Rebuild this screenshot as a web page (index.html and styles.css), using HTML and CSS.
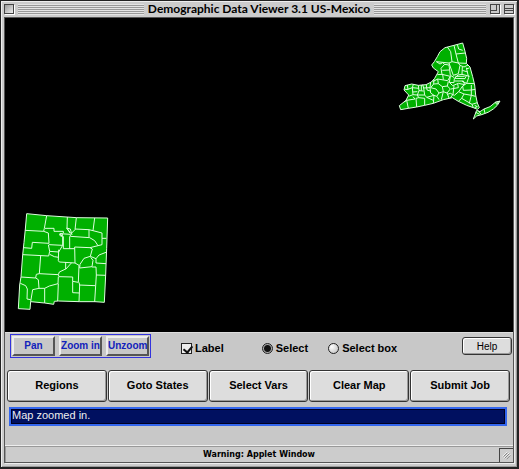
FILE: index.html
```html
<!DOCTYPE html>
<html lang="en">
<head>
	<meta charset="UTF-8">
	<title>Demographic Data Viewer 3.1 US-Mexico</title>
	<link rel="stylesheet" href="styles.css">
</head>
<body>
<div class="window">
	<header class="titlebar">
		<button class="box" type="button" aria-label="Close"></button>
		<div class="stripes"></div>
		<h1>Demographic Data Viewer 3.1 US-Mexico</h1>
		<div class="stripes"></div>
		<button class="box zoombox" type="button" aria-label="Zoom"></button>
		<button class="box shadebox" type="button" aria-label="Collapse"></button>
	</header>
	<main class="content">
		<div class="map">
			<svg class="newmexico" viewBox="0 0 315 330" role="img" aria-label="New Mexico">
				<path class="state" d="M50 26L110 32L200 38L293 39L290 130L287 210L283 292L255 290L208 290L145 288L133 289L131 298L104 294L62 290L60 313L25 311L29 240L33 215L38 150L42 112L46 72Z"/>
				<!-- counties -->
				<path d="M110 32L103 70L101 79L45 76M105 70H132V79H160V84M172 36L171 70L183 86L195 74L199 38M254 39L249 77M195 72L237 74L249 77L276 84V100H289M276 100V119L264 122L254 107L239 98L181 94V88L150 86L158 96V121L117 119M237 75V97M101 79L115 84L117 115L67 112L65 130L41 128M115 119L119 139L146 141L158 121M160 94V131H194M179 94V131M39 149L116 153L119 139M146 134L145 167L148 171L195 174L194 126L240 128L264 122M119 148L133 155L146 157M240 128L247 132L241 154L258 161L267 150L288 142M241 154L222 160L210 178L209 189L246 185L249 166L242 157M92 152L88 206L79 208L77 219L33 216M88 206L145 209L148 201L167 192V171M167 193L185 173M195 174L207 181L205 232L188 229V216L147 215L145 209M246 186H258L259 210L287 211M258 160V174L288 176M259 210L254 290M207 240L255 242M207 232L209 240L207 290M188 229V263L208 264M145 215L144 236L118 243L104 250V294M145 236L143 288M77 219L85 224L87 250L104 250M87 250L68 254L62 290M31 235L47 242L52 252L51 282L62 284"/>
				<path d="M149 87L157 86V94L150 92ZM180 84L170 69L181 72L186 90"/>
			</svg>
			<svg class="newyork" viewBox="0 0 360 270" role="img" aria-label="New York">
				<path class="state" d="M192 31L218 24L224 45L230 70L229 85L240 96L248 125L254 150L257 180L262 204L268 218L262 223L250 218L230 211L205 199L187 188L160 194L130 205L104 211L80 216L55 220L32 224L28 212L48 196L56 180L42 165L45 152L65 147L85 151L108 149L124 141L134 130L145 110L130 99L125 90L133 80L142 65L150 50L165 38Z"/>
				<path class="state" d="M250 252L260 226L270 230L282 222L300 215L316 202L330 198L322 211L310 222L294 232L275 239L260 243Z"/>
				<!-- counties -->
				<path d="M172 36L182 50L186 80L177 84L139 80M192 31L198 57L226 54M202 28L206 42L218 46M198 57L205 84L229 85M186 80L205 84L210 91L205 116L190 121L177 84M139 80L150 87L158 83L164 88L153 100L156 118L142 119M164 88L177 90L181 121L193 128M156 118L181 124L173 137L143 132L128 140M210 91L222 96L234 90M217 96L216 118L239 124M216 118L204 120L194 130L225 131L229 122M229 98L236 128L230 145L252 146M193 130L192 143L178 142L181 124M194 138L220 138L224 149L205 145L188 152L178 142M230 145L218 153L206 170L193 181M192 152L189 178L181 189M218 153L220 166L244 165L256 163M206 170L222 177L215 190L205 199M222 177L244 181L257 184M244 150L244 181L238 205M215 190L234 201L246 208L262 203M246 208L250 218M175 139L172 153L181 162L171 174L160 170L154 194M172 153L157 155L145 146L143 132M157 155L160 170L147 174L140 184L132 181L130 205M132 133L131 147L145 146M131 147L122 158L138 162L147 174M171 174L177 189M122 141L120 158L101 159L98 149M120 158L122 174L132 181L110 187L104 180L101 159M110 187L130 196M85 151L87 167L101 168M87 167L82 180L104 180M82 180L86 188L104 190L104 211M86 188L78 190L80 216M70 148L67 158L87 160M67 158L51 164L43 162M67 158L69 179L82 180M69 179L56 184M69 185L75 192L50 196L55 220M50 196L42 201M52 150L54 163M109 150L111 165L121 168M183 162L205 158L203 146M193 181L181 175L172 178M231 101L238 99M217 106L233 111M94 150L94 167M82 170L68 171M141 184L147 194M158 118L160 134M178 105L157 106M196 124L224 124M230 145L216 139"/>
				<path d="M265 227L274 239M282 222L285 235M254 211L262 215L254 218M257 232L269 238"/>
				<path class="state" d="M316 202L326 200L320 208Z"/>
			</svg>
		</div>
		<div class="controls">
			<div class="tools">
				<button type="button">Pan</button>
				<button type="button">Zoom in</button>
				<button type="button">Unzoom</button>
			</div>
			<div class="options">
				<label><input name="label" type="checkbox" checked>Label</label>
				<label><input name="mode" type="radio" value="select" checked>Select</label>
				<label><input name="mode" type="radio" value="box">Select box</label>
			</div>
			<button class="push help" type="button">Help</button>
		</div>
		<div class="actions">
			<button class="push" type="button">Regions</button>
			<button class="push" type="button">Goto States</button>
			<button class="push" type="button">Select Vars</button>
			<button class="push" type="button">Clear Map</button>
			<button class="push" type="button">Submit Job</button>
		</div>
		<input class="message" type="text" aria-label="Message" value="Map zoomed in." readonly>
		<footer class="warning">
			<span>Warning: Applet Window</span>
			<svg class="grip" viewBox="0 0 14 14" aria-hidden="true">
				<path class="light" d="M3 8L8 3M4 10L10 4M6 11L11 6"/>
				<path d="M4 8L8 4M5 10L10 5M7 11L11 7"/>
			</svg>
		</footer>
	</main>
</div>
</body>
</html>
```
FILE: styles.css
```css
* {
	box-sizing: border-box;
}
body {
	margin: 0;
	font-family: "Liberation Sans", Arial, sans-serif;
	font-size: 11px;
	color: #000;
}
button, input {
	margin: 0;
	padding: 0;
	font: inherit;
	color: inherit;
}
.window {
	display: flex;
	flex-direction: column;
	min-height: 100vh;
	padding: 0 3px 4px;
	border: 1px solid #222;
	border-right-width: 2px;
	border-bottom-width: 2px;
	background: #ccc;
	box-shadow: inset 1px 1px #eee, inset -1px -1px #999;
}

/* title bar */
.titlebar {
	display: flex;
	align-items: center;
	gap: 4px;
	height: 16px;
}
.titlebar h1 {
	margin: 0;
	font: bold 12px/16px Lato, sans-serif;
}
.stripes {
	flex: 1 1 0px;
	height: 11px;
	background: repeating-linear-gradient(#e4e4e4 0 1px, #999 1px 2px);
}
/* one box on the left, two on the right: keeps the title centred */
.box + .stripes {
	flex-basis: 14px;
}
.box {
	width: 10px;
	height: 10px;
	border: 1px solid #444;
	background: linear-gradient(135deg, #999, #eee);
	box-shadow: 1px 1px #fff;
}
.zoombox {
	background:
		linear-gradient(#444, #444) 5px 0 / 1px 6px no-repeat,
		linear-gradient(#444, #444) 0 5px / 6px 1px no-repeat,
		#ccc;
}
.shadebox {
	background:
		linear-gradient(#444, #444) 0 3px / 100% 1px no-repeat,
		linear-gradient(#444, #444) 0 5px / 100% 1px no-repeat,
		#ccc;
}

.content {
	display: flex;
	flex: 1;
	flex-direction: column;
	border: 1px solid #555;
	background: #c8c8c8;
	box-shadow: 1px 1px #eee;
}

/* map */
.map {
	display: flex;
	flex: 1;
	justify-content: space-between;
	padding: 17px 3px 17px 5px;
	background: #000;
}
.map svg {
	fill: none;
	stroke: #dfd;
	stroke-width: 3;
	stroke-linejoin: round;
}
.map .state {
	fill: #00b000;
}
.newmexico {
	align-self: flex-end;
	width: 105px;
	height: 110px;
}
.newyork {
	width: 120px;
	height: 90px;
}

/* tools and options */
.controls {
	display: flex;
	align-items: center;
	padding: 1px 1px 0 5px;
	border-top: 1px solid #ddd;
}
.tools {
	display: flex;
	gap: 4px;
	padding: 1px;
	border: 1px solid #33d;
}
.tools button {
	width: 43px;
	height: 20px;
	border: 2px solid;
	border-color: #eee #555 #555 #eee;
	background: #c8c8c8;
	font-size: 10px;
	font-weight: bold;
	line-height: 14px;
	color: #12b;
	white-space: nowrap;
}
.options {
	display: flex;
	gap: 20px;
	padding: 4px 0 0 30px;
	font-weight: bold;
}
.options label {
	display: flex;
	align-items: center;
	gap: 3px;
}
.options label:first-child {
	margin-right: 18px;
}
.options input {
	appearance: none;
	width: 11px;
	height: 11px;
	border: 1px solid #222;
	background: #eee;
}
.options input[type=checkbox]:checked::before {
	content: "";
	display: block;
	width: 4px;
	height: 7px;
	margin-left: 3px;
	border: solid #111;
	border-width: 0 2px 2px 0;
	transform: rotate(40deg);
}
.options input[type=radio] {
	border-radius: 50%;
	background: radial-gradient(circle at 30% 30%, #fff, #bbb);
}
.options input[type=radio]:checked {
	background: radial-gradient(circle, #111 3px, #aaa 4px);
}
.push {
	border: 1px solid #333;
	border-radius: 3px;
	background: #ddd;
	box-shadow: inset 1px 1px #fff, inset -1px -1px #999;
}
.help {
	width: 50px;
	height: 18px;
	margin-left: auto;
	font-size: 10px;
}
.actions {
	display: flex;
	gap: 1px;
	padding: 12px 3px 5px 2px;
}
.actions .push {
	flex: 1;
	height: 32px;
	padding-bottom: 2px;
	font-weight: bold;
}
.message {
	height: 19px;
	margin: 0 6px 19px 4px;
	padding: 0 1px 4px;
	border: 2px solid #36e;
	outline: 0;
	background: linear-gradient(#ccb, #ccb) 0 1px / 1px 11px no-repeat, #001060;
	box-shadow: inset 0 0 0 1px #002;
	color: #eee;
}

/* warning strip */
.warning {
	display: flex;
	align-items: flex-end;
	height: 17px;
	border-top: 1px solid #eee;
	background: #ccc;
	box-shadow: inset 0 1px #999, inset 1px 0 #999;
	font: bold 8px/15px "DejaVu Sans", sans-serif;
}
.warning span {
	flex: 1;
	padding-left: 14px;
	text-align: center;
}
.grip {
	width: 14px;
	height: 14px;
	border: solid #444;
	border-width: 1px 0 0 1px;
	fill: none;
	stroke: #777;
}
.grip .light {
	stroke: #fff;
}
```
